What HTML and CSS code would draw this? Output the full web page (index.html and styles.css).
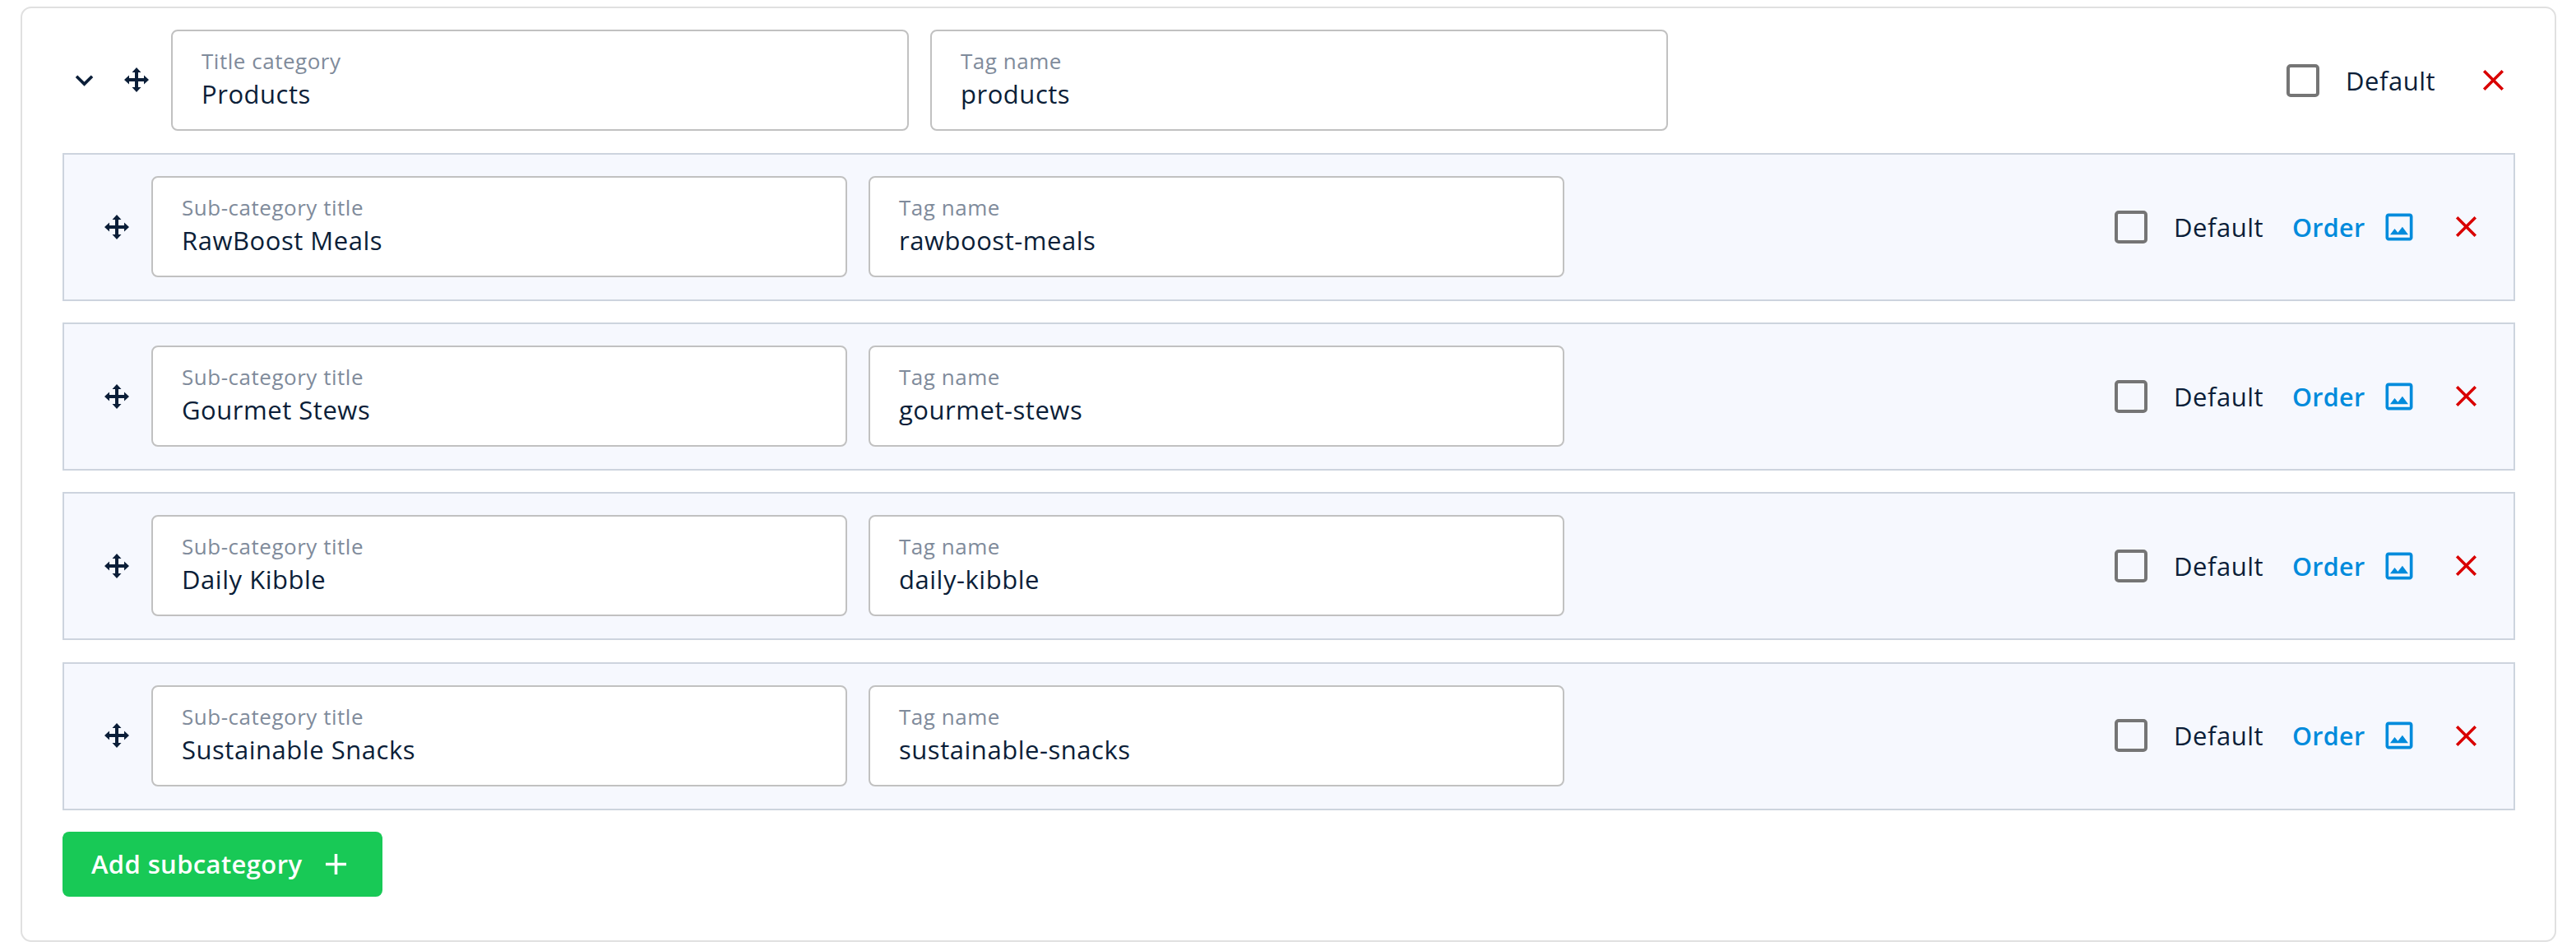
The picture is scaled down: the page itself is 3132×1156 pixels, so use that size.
FILE: index.html
```html
<!DOCTYPE html>
<html lang="en">
<head>
<meta charset="utf-8">
<title>Categories</title>
<link rel="stylesheet" href="styles.css">
</head>
<body>
<svg class="sprite" aria-hidden="true">
  <symbol id="chevron" viewBox="0 0 24 24"><path d="M16.59 8.59 12 13.17 7.41 8.59 6 10l6 6 6-6z"/></symbol>
  <symbol id="move" viewBox="0 0 30 30"><path d="M15 0l5.5 6H17v7h7V9.5l6 5.5-6 5.500V17h-7v7h3.500L15 30l-5.500-6H13v-7H6v3.500L0 15l6-5.500V13h7V6H9.500z"/></symbol>
  <symbol id="close" viewBox="0 0 24 24"><path d="M19 6.410 17.590 5 12 10.590 6.410 5 5 6.410 10.590 12 5 17.590 6.410 19 12 13.410 17.590 19 19 17.590 13.410 12z"/></symbol>
  <symbol id="image" viewBox="0 0 24 24"><path d="M19 5v14H5V5h14m0-2H5c-1.100 0-2 .9-2 2v14c0 1.100.9 2 2 2h14c1.100 0 2-.9 2-2V5c0-1.100-.9-2-2-2zm-4.860 8.860-3 3.870L9 13.140 6 17h12l-3.860-5.140z"/></symbol>
  <symbol id="plus" viewBox="0 0 24 24"><path d="M19 13h-6v6h-2v-6H5v-2h6V5h2v6h6z"/></symbol>
</svg>
<main class="card">
  <header class="category">
    <svg class="icon chevron"><use href="#chevron"/></svg>
    <svg class="move"><use href="#move"/></svg>
    <div class="field"><span class="label">Title category</span><span class="value">Products</span></div>
    <div class="field"><span class="label">Tag name</span><span class="value">products</span></div>
    <div class="actions">
      <span class="checkbox"></span><span class="default">Default</span>
      <svg class="icon close"><use href="#close"/></svg>
    </div>
  </header>
  <div class="list">
    <section class="row">
      <svg class="move"><use href="#move"/></svg>
      <div class="field"><span class="label">Sub-category title</span><span class="value">RawBoost Meals</span></div>
      <div class="field"><span class="label">Tag name</span><span class="value">rawboost-meals</span></div>
      <div class="actions">
        <span class="checkbox"></span><span class="default">Default</span>
        <a class="order">Order</a><svg class="icon image"><use href="#image"/></svg>
        <svg class="icon close"><use href="#close"/></svg>
      </div>
    </section>
    <section class="row">
      <svg class="move"><use href="#move"/></svg>
      <div class="field"><span class="label">Sub-category title</span><span class="value">Gourmet Stews</span></div>
      <div class="field"><span class="label">Tag name</span><span class="value">gourmet-stews</span></div>
      <div class="actions">
        <span class="checkbox"></span><span class="default">Default</span>
        <a class="order">Order</a><svg class="icon image"><use href="#image"/></svg>
        <svg class="icon close"><use href="#close"/></svg>
      </div>
    </section>
    <section class="row">
      <svg class="move"><use href="#move"/></svg>
      <div class="field"><span class="label">Sub-category title</span><span class="value">Daily Kibble</span></div>
      <div class="field"><span class="label">Tag name</span><span class="value">daily-kibble</span></div>
      <div class="actions">
        <span class="checkbox"></span><span class="default">Default</span>
        <a class="order">Order</a><svg class="icon image"><use href="#image"/></svg>
        <svg class="icon close"><use href="#close"/></svg>
      </div>
    </section>
    <section class="row">
      <svg class="move"><use href="#move"/></svg>
      <div class="field"><span class="label">Sub-category title</span><span class="value">Sustainable Snacks</span></div>
      <div class="field"><span class="label">Tag name</span><span class="value">sustainable-snacks</span></div>
      <div class="actions">
        <span class="checkbox"></span><span class="default">Default</span>
        <a class="order">Order</a><svg class="icon image"><use href="#image"/></svg>
        <svg class="icon close"><use href="#close"/></svg>
      </div>
    </section>
  </div>
  <button class="add"><span class="add-text">Add subcategory</span><svg class="icon"><use href="#plus"/></svg></button>
</main>
</body>
</html>
```
FILE: styles.css
```css
* { box-sizing: border-box; }

body {
  margin: 0;
  padding: 8px 24px 0 25px;
  background: #fff;
  color: #0b1e38;
  font: 31px/44px "Open Sans", sans-serif;
  letter-spacing: 0.53px;
}

.sprite { display: none; }

.card {
  height: 1137px;
  padding: 26px 48px 0 49px;
  border: 2px solid #e0e0e0;
  border-radius: 13px;
}

.category,
.row {
  display: flex;
  align-items: center;
}

.category {
  height: 123px;
  margin-bottom: 27px;
  padding-left: 5px;
}

.icon {
  flex: none;
  width: 43px;
  height: 43px;
  fill: currentColor;
}

.move {
  flex: none;
  width: 30px;
  height: 30px;
  margin-right: 27px;
  fill: currentColor;
}

.category .move { margin: 0 27px 2px 27px; }

.field {
  display: flex;
  flex: none;
  flex-direction: column;
  width: 846px;
  height: 123px;
  margin-right: 26px;
  padding: 18px 35px;
  border: 2px solid #c1c1c1;
  border-radius: 8px;
  background: #fff;
}

.category .field { width: 897px; }

.label {
  color: #7f8b9b;
  font-size: 26px;
  line-height: 36px;
  letter-spacing: 0.52px;
}

.list {
  display: flex;
  flex-direction: column;
  gap: 26.2px;
}

.row {
  height: 180px;
  padding: 0 36px 1px 49px;
  border: 2px solid #cdd4de;
  background: #f6f8fe;
}

.actions {
  display: flex;
  align-items: center;
  margin-left: auto;
}

.category .actions { margin-right: 5px; }

.checkbox {
  width: 40px;
  height: 40px;
  border: 4px solid #757575;
  border-radius: 5px;
}

.default {
  width: 110px;
  margin-left: 32px;
}

.category .default { margin-right: 48px; }

.order {
  width: 92px;
  margin: 0 16px 0 34px;
  color: #008bdc;
  font-size: 30.5px;
  font-weight: 600;
  letter-spacing: 0.3px;
}

.image {
  width: 44px;
  height: 44px;
  margin-right: 38px;
  color: #008bdc;
}

.close { color: #d90000; }

.add {
  display: flex;
  align-items: center;
  justify-content: space-between;
  width: 389px;
  height: 79px;
  margin-top: 26px;
  padding: 0 35px;
  border: 0;
  border-radius: 8px;
  background: #18c956;
  color: #fff;
  font: 600 31px/44px "Open Sans", sans-serif;
  letter-spacing: 0.37px;
}
```
